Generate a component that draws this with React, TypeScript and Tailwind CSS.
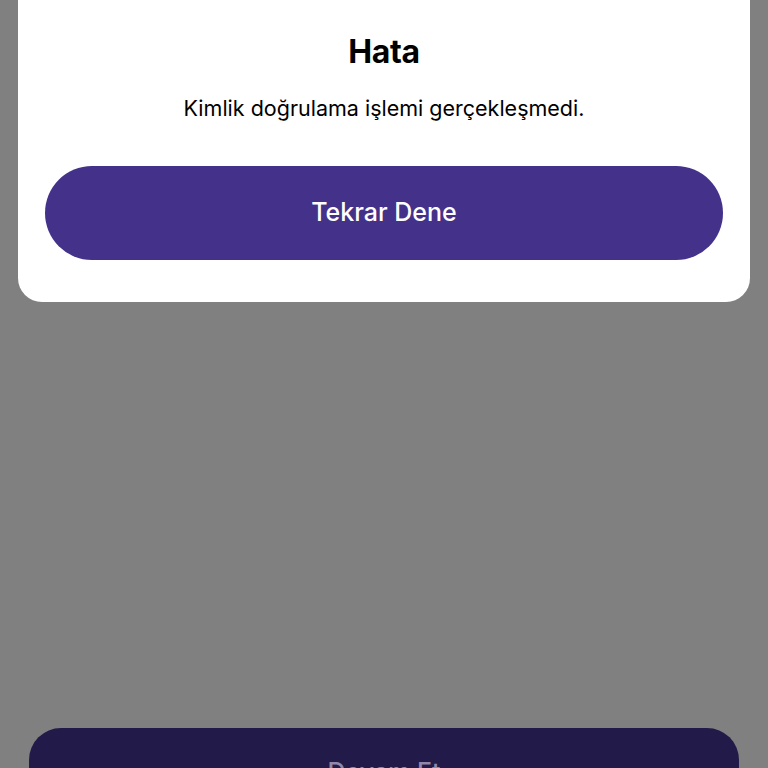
export default function App() {
  return (
    <div
      className="flex h-[768px] w-[768px] flex-col overflow-hidden bg-[#808080]"
      style={{ fontFamily: 'Inter, "Noto Sans", sans-serif' }}
    >
      <div className="mx-[18px] -mt-[24px] flex flex-col items-center rounded-[24px] bg-white px-[27px] pb-[42px] pt-[57px]">
        <h1 className="text-[32px] leading-[38px] font-bold tracking-[-0.3px] text-black">Hata</h1>
        <p className="mt-[22px] text-[21.5px] leading-[30px] text-black">Kimlik doğrulama işlemi gerçekleşmedi.</p>
        <button
          type="button"
          className="mt-[43px] flex h-[94px] w-full items-center justify-center rounded-full bg-[#44318a] text-[25px] font-medium text-white"
        >
          Tekrar Dene
        </button>
      </div>

      <div className="flex-1" />

      <div className="mx-[29px] -mb-[60px] flex h-[100px] shrink-0 items-start justify-center rounded-[32px] bg-[#221a48] pt-[32px]">
        <span className="text-[25px] leading-[25px] font-medium text-[#8f88ab]">Devam Et</span>
      </div>
    </div>
  );
}
